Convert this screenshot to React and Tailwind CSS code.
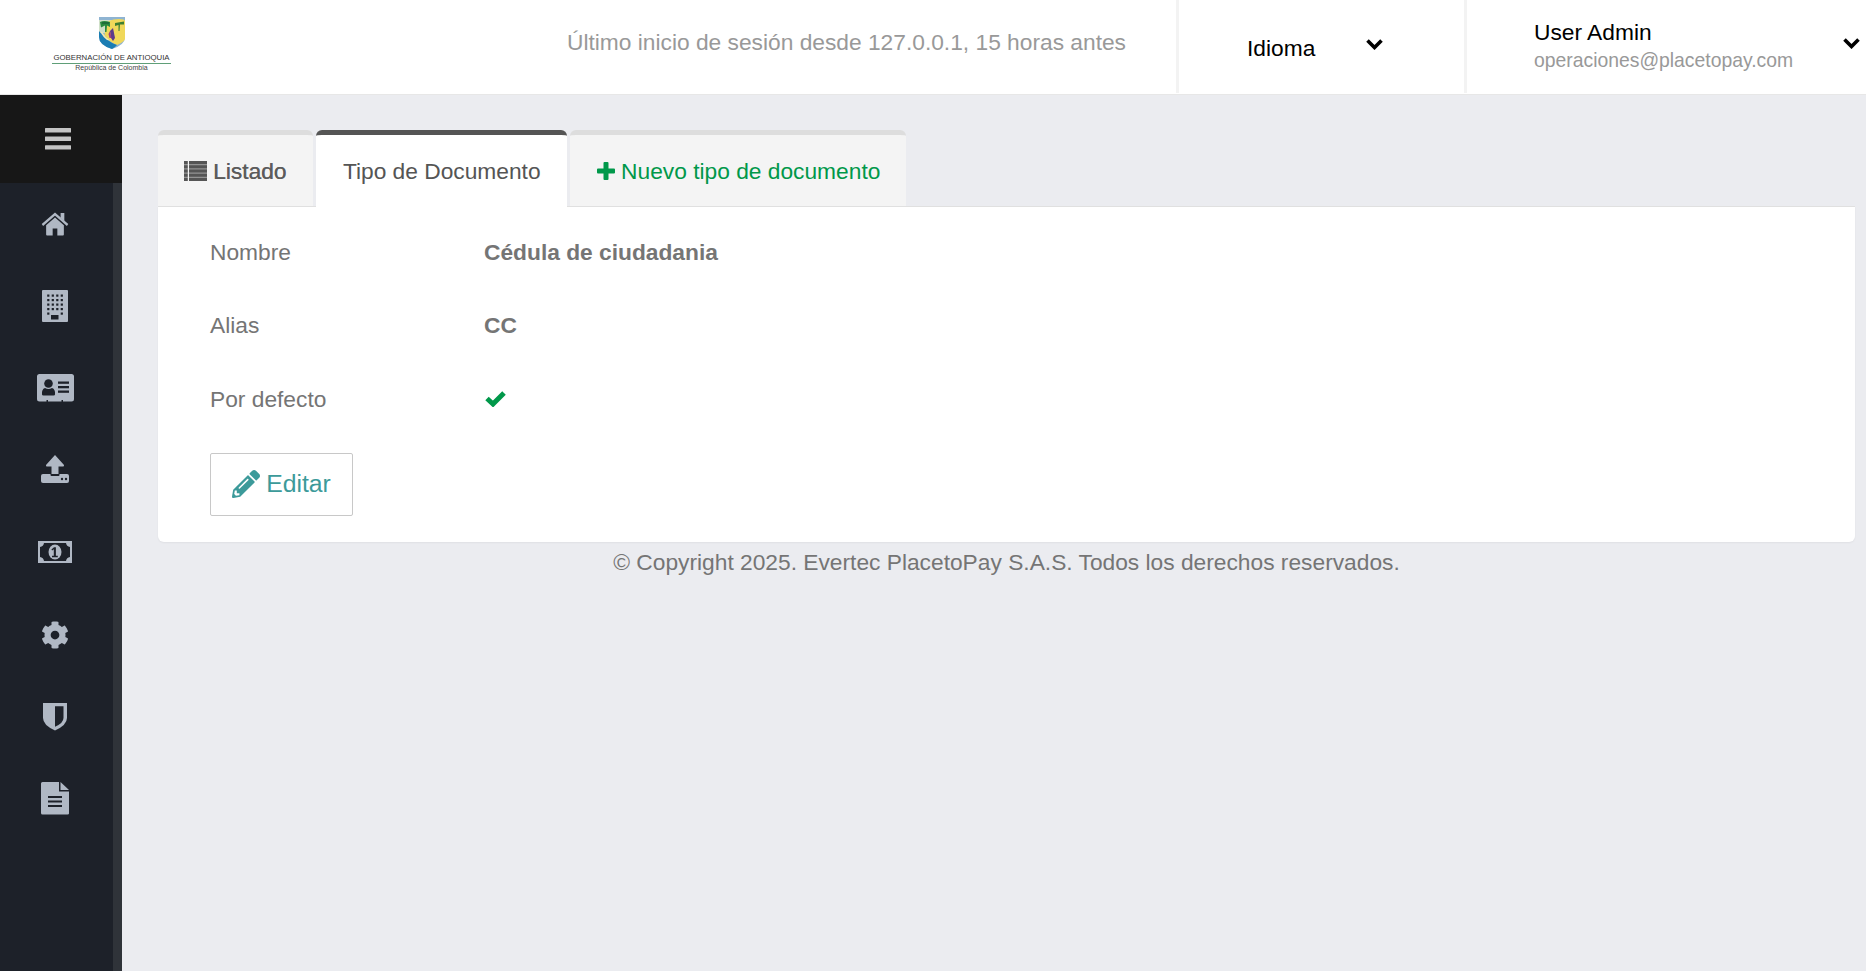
import React from "react";
import { FaCog, FaPencilAlt } from "react-icons/fa";

const Home = () => (
  <svg width="28" height="24" viewBox="0 0 30 24" preserveAspectRatio="none" className="text-[#b0b8c4]">
    <path fill="currentColor" d="M15 5.5 L5.5 13.2 V22.5 Q5.5 23.5 6.5 23.5 H12.5 V16.5 H17.5 V23.5 H23.500 Q24.500 23.500 24.500 22.500 V13.200 Z" />
    <path fill="none" stroke="currentColor" strokeWidth="2.400" d="M1.500 13 L15 2 L28.500 13" />
    <path fill="currentColor" d="M21 1 H25 V9 L21 6 Z" />
  </svg>
);
const Building = () => {
  const dots = [];
  for (let r = 0; r < 5; r++)
    for (let c = 0; c < 4; c++) {
      if (r === 4 && (c === 1 || c === 2)) continue;
      dots.push(<rect key={r + "-" + c} x={5.200 + c * 4.500} y={4.500 + r * 4.500} width="2.200" height="2.200" />);
    }
  return (
    <svg width="26" height="32" viewBox="0 0 26 32">
      <rect width="26" height="32" rx="1" fill="#b0b8c4" />
      <g fill="#1d2129">{dots}<rect x="9" y="25" width="7.500" height="4.500" /></g>
    </svg>
  );
};
const Card = () => (
  <svg width="37" height="28" viewBox="0 0 37 28">
    <path fill="#b0b8c4" d="M2.500 0 H34.500 Q37 0 37 2.500 V25 Q37 27.500 34.500 27.500 H26 V26 H24.500 V27.500 H11 V26 H9.500 V27.500 H2.500 Q0 27.500 0 25 V2.500 Q0 0 2.500 0 Z" />
    <g fill="#1d2129">
      <circle cx="11.500" cy="9.500" r="4.300" />
      <path d="M5 20.500 Q4.500 15 8 14 Q11.500 16 15 14 Q18.500 15 18 20.500 Q18 21.500 16.500 21.500 H6.500 Q5 21.500 5 20.500 Z" />
      <rect x="21" y="7.500" width="11" height="2.300" />
      <rect x="21" y="12" width="11" height="2.300" />
      <rect x="21" y="16.500" width="11" height="2.300" />
    </g>
  </svg>
);
const Upload = () => (
  <svg width="30" height="28" viewBox="0 0 30 28" className="-translate-y-px">
    <path fill="#b0b8c4" d="M1 21 Q1 19 3 19 H27 Q29 19 29 21 V26 Q29 28 27 28 H3 Q1 28 1 26 Z" />
    <path fill="#1d2129" d="M10.500 18 H19.500 V20 Q19.500 21 18.500 21 H11.500 Q10.500 21 10.500 20 Z" />
    <path fill="#b0b8c4" d="M15 0 L24 10 Q24.300 11.500 23 11.500 H18.500 V19 H11.500 V11.500 H7 Q5.700 11.500 6 10 Z" />
    <circle cx="22" cy="24" r="1.200" fill="#1d2129" />
    <circle cx="26" cy="24" r="1.200" fill="#1d2129" />
  </svg>
);
const Money = () => (
  <svg width="34" height="22" viewBox="0 0 34 22">
    <rect width="34" height="22" fill="#b0b8c4" />
    <path fill="#1d2129" d="M6 2 H28 Q28.500 5.500 32 6 V16 Q28.500 16.500 28 20 H6 Q5.500 16.500 2 16 V6 Q5.500 5.500 6 2 Z" />
    <ellipse cx="17" cy="11" rx="6.500" ry="7.500" fill="#b0b8c4" />
    <path fill="#1d2129" d="M14 14.800 H15.800 V8.200 L14.200 9.500 L13.400 8.500 L16 6.300 H17.900 V14.800 H19.800 V16.300 H14 Z" />
  </svg>
);
const Shield = () => (
  <svg width="24" height="28" viewBox="0 0 24 28">
    <path fill="#b0b8c4" d="M0 0 H24 V15 Q24 22 12 27.500 Q0 22 0 15 Z" />
    <path fill="#1d2129" d="M12 3.300 H20.500 V15 Q20.500 20 12 23.800 Z" />
  </svg>
);
const FileDoc = () => (
  <svg width="28" height="33" viewBox="0 0 28 33">
    <path fill="#b0b8c4" d="M1.500 0 H18 V9.500 H28 V31.500 Q28 32.500 26.500 32.500 H1.500 Q0 32.500 0 31 V1.500 Q0 0 1.500 0 Z" />
    <path fill="#b0b8c4" d="M19.500 0 L28 8 H19.500 Z" />
    <g fill="#1d2129">
      <rect x="7" y="14" width="14" height="2" />
      <rect x="7" y="18.500" width="14" height="2" />
      <rect x="7" y="23" width="14" height="2" />
    </g>
  </svg>
);
const Bars = () => (
  <svg width="26" height="22" viewBox="0 0 26 22" className="fill-[#c4c4c4]">
    <rect width="26" height="4.400" rx="0.500" />
    <rect y="8.600" width="26" height="4.400" rx="0.500" />
    <rect y="17.200" width="26" height="4.400" rx="0.500" />
  </svg>
);
const ListIcon = () => (
  <svg width="23" height="20" viewBox="0 0 23 20" className="fill-[#555555]">
    {[0, 4.100, 8.200, 12.300, 16.400].map((y) => (
      <g key={y}>
        <rect y={y} width="3.800" height="3.600" />
        <rect x="5" y={y} width="18" height="3.600" />
      </g>
    ))}
  </svg>
);
const Plus = () => (
  <svg width="18" height="18" viewBox="0 0 18 18" className="fill-[#00984a]">
    <path d="M6.500 1 Q6.500 0 7.500 0 H10.500 Q11.500 0 11.500 1 V6.500 H17 Q18 6.500 18 7.500 V10.500 Q18 11.500 17 11.500 H11.500 V17 Q11.500 18 10.500 18 H7.500 Q6.500 18 6.500 17 V11.500 H1 Q0 11.500 0 10.500 V7.500 Q0 6.500 1 6.500 H6.500 Z" />
  </svg>
);
const Check = () => (
  <svg width="21" height="16" viewBox="0 0 21 16">
    <path fill="none" stroke="#00984a" strokeWidth="5" strokeLinejoin="miter" d="M2 7.500 L8 13 L19 2" />
  </svg>
);
const Chevron = ({ className }) => (
  <svg width="17" height="11" viewBox="0 0 17 11" className={className}>
    <path fill="none" stroke="#000" strokeWidth="3.600" d="M1.500 1.500 L8.500 8.500 L15.500 1.500" />
  </svg>
);
const Crest = () => (
  <svg width="26" height="32" viewBox="0 0 26 32">
    <path fill="#8fb4d2" d="M0 0 H26 V20 Q26 28 13 32 Q0 28 0 20 Z" />
    <path fill="#cfe0c8" d="M0 3 H14 V16 H0 Z" />
    <path fill="#f0d85a" d="M10 4 Q14 2 20 2 Q26 2 26 4 V22 Q25 25 18 28 Q10 25 5.500 18 Q6 12 10 4 Z" />
    <path fill="#1b7db3" d="M0 14 Q3 18 5.500 20 Q10 25 18 28 Q16 30.500 13 32 Q0 28 0 20 Z" />
    <path fill="#f6e9b0" d="M3 15 Q6 20 11 23.500 L8 23 Q4 20 1.500 15 Z" />
    <path fill="#2a8a3f" d="M1 5 Q5 3 11 5 L11 10 L8 8.500 L7.500 15 L6 15 L6 8.500 L2 10.500 Z" />
    <path fill="#1f6d3a" d="M3 5 H10 V7 H3 Z" />
    <path fill="#5b3a8c" d="M11 14 L14 11 L16 21 L14 24 L12 21 Z" />
    <path fill="#9c3f7a" d="M9.500 17 L11 14 L12.500 21 L10.500 21 Z" />
    <path fill="#3f7f33" d="M16 6 L25 4.500 L25 7.500 L21 7.500 L20.500 14 L19.500 14 L19.500 8 L16 9 Z" />
  </svg>
);

const navIcons = [Home, Building, Card, Upload, Money, () => <FaCog size={28} className="text-[#b0b8c4]" />, Shield, FileDoc];

export default function App() {
  return (
    <div className="flex h-[971px] w-[1866px] flex-col overflow-hidden bg-[#ebecf0] font-['Liberation_Sans',sans-serif] text-[#757575]">
      <header className="flex h-[95px] shrink-0 border-b border-[#e7e7e7] bg-white">
        <div className="flex w-[567px] shrink-0 pl-[52px]">
          <div className="flex w-[119px] flex-col items-center pt-[17px]">
            <Crest />
            <div className="mt-[3.500px] w-[119px] whitespace-nowrap border-b border-[#5f9f78] text-center text-[7.800px] leading-[10px] text-[#333]">GOBERNACIÓN DE ANTIOQUIA</div>
            <div className="whitespace-nowrap text-center text-[7px] leading-[8.500px] text-[#444]">República de Colombia</div>
          </div>
        </div>
        <div className="w-[609px] shrink-0 whitespace-nowrap pt-[28px] text-[22.750px] leading-[28px] text-[#999]">Último inicio de sesión desde 127.0.0.1, 15 horas antes</div>
        <div className="flex h-[93px] w-[291px] shrink-0 border-x-[3px] border-[#f3f3f3] pl-[68px] text-black">
          <span className="mt-[35px] w-[119px] text-[22.750px] leading-[26px]">Idioma</span>
          <Chevron className="mt-[39px]" />
        </div>
        <div className="flex h-[93px] flex-1 pl-[67px] text-black">
          <div className="w-[309px] pt-[19px]">
            <div className="text-[22.750px] leading-[26px]">User Admin</div>
            <div className="mt-[2px] text-[19.350px] leading-[26px] text-[#999]">operaciones@placetopay.com</div>
          </div>
          <Chevron className="mt-[38px]" />
        </div>
      </header>
      <div className="flex min-h-0 flex-1">
        <aside className="flex w-[122px] shrink-0 flex-col bg-[#1d2129]">
          <div className="flex h-[88px] shrink-0 items-center justify-center bg-[#171717] pr-[6px]"><Bars /></div>
          <div className="flex flex-1">
            <nav className="w-[113px]">
              {navIcons.map((Icon, i) => (
                <div key={i} className="flex h-[82.120px] items-center justify-center pr-[3px]"><Icon /></div>
              ))}
            </nav>
            <div className="w-[9px] bg-[#2f3339]" />
          </div>
        </aside>
        <main className="min-w-0 flex-1 pl-[36px] pr-[11px] pt-[35px]">
          <div className="flex h-[76px] items-start gap-[3px] text-[22.750px] leading-[28px]">
            <div className="flex h-[76px] items-center gap-[6px] rounded-t-[6px] border-t-[5px] border-[#dddddd] bg-[#f4f4f4] pl-[26px] pr-[27px] text-[#5b5b5b] [text-shadow:0.4px_0_0_#777777]"><ListIcon /><span>Listado</span></div>
            <div className="relative z-10 flex h-[77px] items-center rounded-t-[6px] border-t-[5px] border-[#555555] bg-white px-[26.500px] text-[#555]">Tipo de Documento</div>
            <div className="flex h-[76px] items-center gap-[6px] rounded-t-[6px] border-t-[5px] border-[#dddddd] bg-[#f4f4f4] pl-[27px] pr-[26px] text-[#00984a]"><Plus /><span>Nuevo tipo de documento</span></div>
          </div>
          <section className="rounded-b-[6px] border-t border-[#e0e0e0] bg-white px-[52px] pb-[26.500px] pt-[8px] text-[22.750px] leading-[28px] shadow-[0_1px_2px_rgba(0,0,0,0.05)]">
            <div className="flex h-[73.500px] items-center"><span className="w-[274px]">Nombre</span><b>Cédula de ciudadania</b></div>
            <div className="flex h-[73.500px] items-center"><span className="w-[274px]">Alias</span><b>CC</b></div>
            <div className="flex h-[73.500px] items-center"><span className="w-[275px]">Por defecto</span><Check /></div>
            <button className="mt-[17.500px] flex h-[62.500px] w-[143px] items-center justify-center gap-[6px] rounded-[2px] border border-[#c8c8c8] bg-white text-[24.750px] text-[#3c9a9a]"><FaPencilAlt size={28} /><span>Editar</span></button>
          </section>
          <footer className="pt-[6px] text-center text-[22.750px] leading-[28px]">© Copyright 2025. Evertec PlacetoPay S.A.S. Todos los derechos reservados.</footer>
        </main>
      </div>
    </div>
  );
}
